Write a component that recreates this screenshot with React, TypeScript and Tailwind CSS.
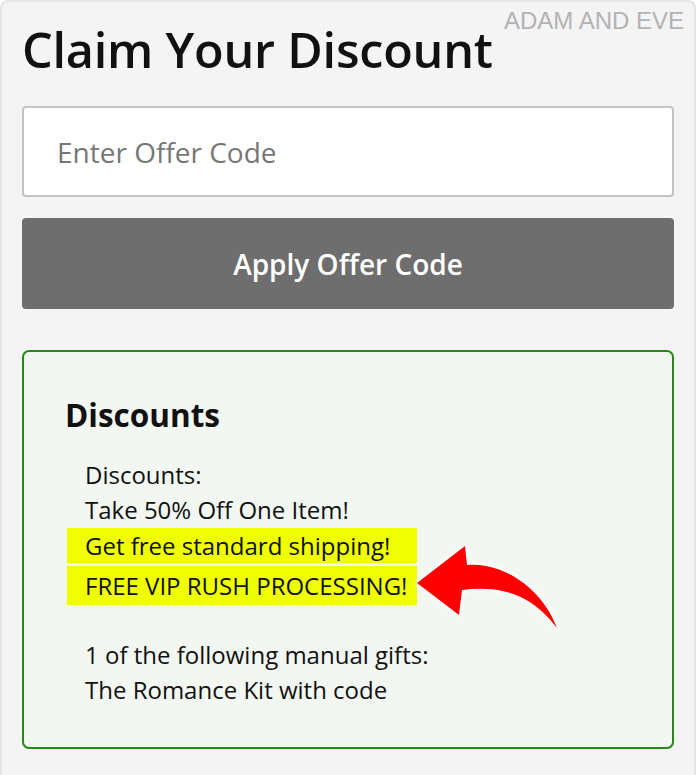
import React from "react";

const font = { fontFamily: '"Open Sans", "Noto Sans", sans-serif' };

function CurvedArrow() {
  return (
    <svg
      viewBox="0 0 160 100"
      className="absolute left-[405px] top-[535px] w-[160px] h-[100px]"
      style={{ filter: "drop-shadow(0 0 2px #fff) drop-shadow(0 0 2px #fff)" }}
    >
      <path
        d="M10 46 L58 9 L60 28 C95 25 135 50 150 91 C125 58 95 48 55 53 L52 78 Z"
        fill="#ff0000"
      />
    </svg>
  );
}

export default function App() {
  return (
    <div
      className="relative w-[696px] h-[775px] bg-[#f4f4f4] border-2 border-b-0 border-[#e6e6e6] rounded-t-[8px] px-[20px] overflow-hidden"
      style={font}
    >
      {/* watermark */}
      <div
        className="absolute right-[10px] top-[7px] text-[24px] leading-[24px] text-[#b3b3b3]"
        style={{ fontFamily: '"Liberation Sans", Arial, sans-serif' }}
      >
        ADAM AND EVE
      </div>

      <h1 className="mt-[17px] text-[48.5px] leading-[60px] font-semibold text-[#111] tracking-[-0.2px]">
        Claim Your Discount
      </h1>

      <input
        type="text"
        placeholder="Enter Offer Code"
        className="mt-[27px] block w-full h-[91px] bg-white border-2 border-[#c4c4c4] rounded-[4px] px-[33px] text-[28px] text-[#333] placeholder:text-[#777] outline-none"
        style={font}
      />

      <button className="mt-[21px] block w-full h-[91px] bg-[#6e6e6e] rounded-[4px] text-white text-[28px] font-semibold">
        Apply Offer Code
      </button>

      <div className="mt-[41px] border-2 border-[#238a14] rounded-[7px] bg-[#f3f7f2] pt-[43px] pb-[40px] pl-[41px]">
        <h2 className="text-[31.5px] leading-[40px] font-bold text-[#111]">Discounts</h2>
        <div className="mt-[22px] text-[24px] text-[#111]">
          <div className="pl-[20px] leading-[35px]">Discounts:</div>
          <div className="pl-[20px] leading-[35px]">Take 50% Off One Item!</div>
          <div className="ml-[2px] w-[350px] bg-[#f0ff00] pl-[18px] leading-[35px] mt-[1px]">
            Get free standard shipping!
          </div>
          <div className="ml-[2px] w-[350px] bg-[#f0ff00] pl-[18px] leading-[39px] mt-[3px]">
            FREE VIP RUSH PROCESSING!
          </div>
          <div className="pl-[20px] leading-[35px] mt-[32px]">1 of the following manual gifts:</div>
          <div className="pl-[20px] leading-[35px]">The Romance Kit with code</div>
        </div>
      </div>

      <CurvedArrow />
    </div>
  );
}
